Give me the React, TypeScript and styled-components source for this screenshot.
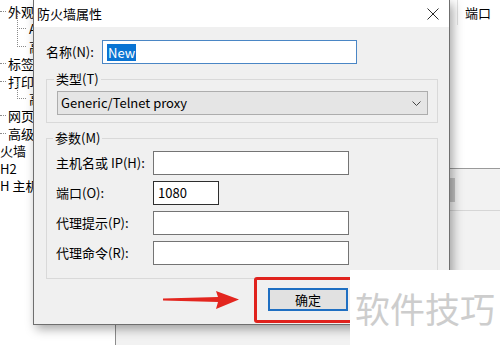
import React from "react";
import styled, { createGlobalStyle } from "styled-components";

const GlobalStyle = createGlobalStyle`
  html, body {
    margin: 0;
    padding: 0;
    background: #fff;
  }
  body {
    font-family: "Noto Sans CJK SC", "Noto Sans", sans-serif;
    font-size: 13px;
    color: #000;
  }
`;

const Screen = styled.div`
  position: relative;
  width: 500px;
  height: 345px;
  overflow: hidden;
  background: #fff;
`;

/* ---------- window behind the dialog ---------- */

const BackWindow = styled.div`
  display: grid;
  grid-template-columns: 116px 1fr;
  height: 100%;
`;

const TreePane = styled.ul`
  list-style: none;
  margin: 0;
  padding: 3px 0 0;
  border-right: 1px solid #8c8c8c;
  overflow: hidden;
`;

const TreeItem = styled.li<{ $level: number }>`
  position: relative;
  height: 17.4px;
  line-height: 17.4px;
  white-space: nowrap;
  padding-left: ${(p) => (p.$level === 2 ? 29 : p.$level === 1 ? 8 : 0)}px;

  &::before {
    content: "";
    position: absolute;
    display: ${(p) => (p.$level === 0 ? "none" : "block")};
    left: ${(p) => (p.$level === 2 ? 17 : 0)}px;
    top: ${(p) => (p.$level === 2 ? -8 : 8)}px;
    width: ${(p) => (p.$level === 2 ? 8 : 6)}px;
    height: ${(p) => (p.$level === 2 ? 16 : 0)}px;
    border-bottom: 1px dotted #8a8a8a;
    border-left: ${(p) => (p.$level === 2 ? "1px dotted #8a8a8a" : "none")};
  }
`;

const RightPane = styled.div`
  display: flex;
  flex-direction: column;
`;

const ListView = styled.div`
  height: 168px;
  background: #fff;
  border-bottom: 1px solid #9a9a9a;
`;

const ListHeader = styled.div`
  display: flex;
  justify-content: flex-end;
  height: 25px;
`;

const HeaderCell = styled.div`
  width: 35px;
  padding-left: 7px;
  border-left: 1px solid #e2e2e2;
  line-height: 25px;
`;

const LowerArea = styled.div`
  flex: 1;
  display: flex;
  justify-content: flex-end;
  background: #f2f2f2;
`;

const Track = styled.div`
  width: 51px;
  height: 42px;
  border-bottom: 1px solid #d6d6d6;
  padding-top: 9px;
  box-sizing: border-box;
`;

const Thumb = styled.div`
  width: 6px;
  height: 24px;
  background: #c4c4c4;
`;

/* ---------- dialog ---------- */

const Dialog = styled.div`
  position: absolute;
  left: 33px;
  top: 0;
  width: 417px;
  height: 325px;
  box-sizing: border-box;
  border: 1px solid #6f6f6f;
  border-top: none;
  background: #f0f0f0;
  box-shadow: 3px 4px 10px rgba(0, 0, 0, 0.35);
  display: flex;
  flex-direction: column;
`;

const TitleBar = styled.div`
  height: 27px;
  flex: none;
  background: #fff;
  display: flex;
  align-items: center;
  justify-content: space-between;
  padding: 0 10px 0 3px;
`;

const Title = styled.span`
  font-size: 13px;
  line-height: 16px;
`;

const Body = styled.div`
  padding: 13px 11px 0 12px;
  display: flex;
  flex-direction: column;
`;

const NameRow = styled.div`
  display: flex;
  align-items: center;
  height: 24px;
`;

const Label = styled.span<{ $width: number }>`
  width: ${(p) => p.$width}px;
  flex: none;
  line-height: 16px;
  white-space: nowrap;
`;

const TextBox = styled.div<{ $width: number; $tone?: "focus" | "dark" }>`
  width: ${(p) => p.$width}px;
  height: 24px;
  box-sizing: border-box;
  background: #fff;
  border: 1px solid
    ${(p) => (p.$tone === "focus" ? "#4a86c5" : p.$tone === "dark" ? "#2e2e2e" : "#747474")};
  display: flex;
  align-items: center;
  padding-left: 4px;
  line-height: 16px;
`;

const Selected = styled.span`
  background: #0a74d3;
  color: #fff;
  padding: 0 1px;
  line-height: 17px;
`;

const Group = styled.fieldset<{ $pad: number; $bottom: number }>`
  margin: 7px 0 0;
  padding: 0 9px ${(p) => p.$bottom}px ${(p) => p.$pad}px;
  border: 1px solid #d9d9d9;
  min-width: 0;
`;

const Legend = styled.legend`
  padding: 0 2px;
  margin-left: -3px;
  line-height: 16px;
  font-size: 13px;
`;

const Combo = styled.div`
  margin-top: 4px;
  height: 24px;
  box-sizing: border-box;
  border: 1px solid #adadad;
  background: #e5e5e5;
  display: flex;
  align-items: center;
  justify-content: space-between;
  padding: 0 6px 0 3px;
  line-height: 16px;
`;

const FieldGrid = styled.div`
  margin-top: 5px;
  display: grid;
  grid-template-columns: 97px auto;
  row-gap: 6px;
  align-items: center;
  justify-items: start;
`;

/* the cancel button sits under the watermark, so only its room is kept */
const ButtonRow = styled.div`
  margin-top: 9px;
  display: flex;
  justify-content: flex-end;
  padding-right: 90px;
`;

const Button = styled.div<{ $primary?: boolean }>`
  width: 80px;
  height: 23px;
  box-sizing: border-box;
  background: #e1e1e1;
  border: ${(p) => (p.$primary ? "2px solid #1f6fc2" : "1px solid #adadad")};
  display: flex;
  align-items: center;
  justify-content: center;
  line-height: 16px;
`;

/* ---------- annotations on top of the screenshot ---------- */

const RedFrame = styled.div`
  position: absolute;
  left: 254px;
  top: 277px;
  width: 200px;
  height: 46px;
  box-sizing: border-box;
  border: 3px solid #e0221d;
  border-radius: 3px;
`;

const Arrow = styled.svg`
  position: absolute;
  left: 160px;
  top: 288px;
`;

const Watermark = styled.div`
  position: absolute;
  left: 350px;
  top: 270px;
  width: 150px;
  height: 75px;
  background: #fff;
  box-sizing: border-box;
  padding: 20px 0 0 5px;
  font-size: 35px;
  line-height: 36px;
  color: #cdcdcd;
  white-space: nowrap;
`;

const tree: [number, string][] = [
  [1, "外观"],
  [2, "A"],
  [2, "高"],
  [1, "标签"],
  [1, "打印"],
  [2, "高"],
  [1, "网页"],
  [1, "高级"],
  [0, "火墙"],
  [0, "H2"],
  [0, "H 主机"],
];

const fields: { label: string; width: number; value?: string; tone?: "dark" }[] = [
  { label: "主机名或 IP(H):", width: 196 },
  { label: "端口(O):", width: 66, value: "1080", tone: "dark" },
  { label: "代理提示(P):", width: 196 },
  { label: "代理命令(R):", width: 196 },
];

const App = () => {
  return (
    <Screen>
      <GlobalStyle />
      <BackWindow>
        <TreePane>
          {tree.map(([level, text], i) => (
            <TreeItem key={i} $level={level}>
              {text}
            </TreeItem>
          ))}
        </TreePane>
        <RightPane>
          <ListView>
            <ListHeader>
              <HeaderCell>端口</HeaderCell>
            </ListHeader>
          </ListView>
          <LowerArea>
            <Track>
              <Thumb />
            </Track>
          </LowerArea>
        </RightPane>
      </BackWindow>

      <Dialog>
        <TitleBar>
          <Title>防火墙属性</Title>
          <svg width="12" height="12" viewBox="0 0 12 12">
            <path d="M0.5 0.5 L11.5 11.5 M11.5 0.5 L0.5 11.5" stroke="#2b2b2b" strokeWidth="1" fill="none" />
          </svg>
        </TitleBar>
        <Body>
          <NameRow>
            <Label $width={56}>名称(N):</Label>
            <TextBox $width={255} $tone="focus">
              <Selected>New</Selected>
            </TextBox>
          </NameRow>

          <Group $pad={10} $bottom={7}>
            <Legend>类型(T)</Legend>
            <Combo>
              <span>Generic/Telnet proxy</span>
              <svg width="9" height="5" viewBox="0 0 9 5">
                <path d="M0.5 0.5 L4.5 4.5 L8.5 0.5" stroke="#444" strokeWidth="1" fill="none" />
              </svg>
            </Combo>
          </Group>

          <Group $pad={9} $bottom={13}>
            <Legend>参数(M)</Legend>
            <FieldGrid>
              {fields.map((f) => (
                <React.Fragment key={f.label}>
                  <Label $width={97}>{f.label}</Label>
                  <TextBox $width={f.width} $tone={f.tone}>
                    {f.value}
                  </TextBox>
                </React.Fragment>
              ))}
            </FieldGrid>
          </Group>

          <ButtonRow>
            <Button $primary>确定</Button>
          </ButtonRow>
        </Body>
      </Dialog>

      <RedFrame />
      <Arrow width="82" height="24" viewBox="0 0 82 24">
        <polygon points="3,10.6 58,9 56,3 79,11.5 56,21 58,14 3,12.4" fill="#e3261f" />
      </Arrow>
      <Watermark>软件技巧</Watermark>
    </Screen>
  );
};

export default App;
